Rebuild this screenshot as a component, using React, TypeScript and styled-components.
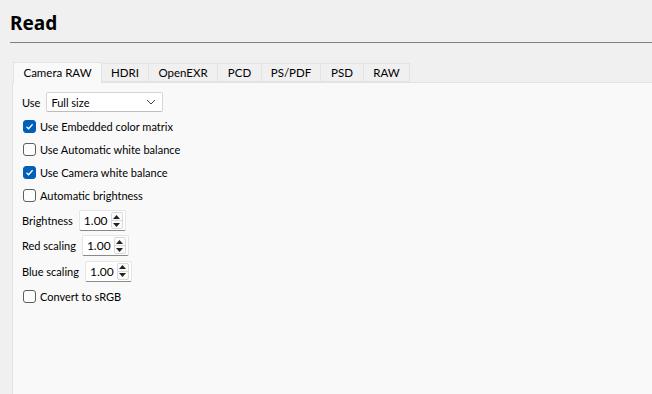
import React from "react";
import styled, { createGlobalStyle } from "styled-components";

const Global = createGlobalStyle`
  html, body { margin: 0; padding: 0; background: #f0f0f0; }
  body { font-family: "Lato", "Liberation Sans", sans-serif; font-size: 11px; color: #000; }
  * { box-sizing: border-box; }
`;

const Page = styled.div`
  width: 652px;
  height: 394px;
  overflow: hidden;
  background: #f0f0f0;
  display: flex;
  flex-direction: column;
`;

const Title = styled.h1`
  margin: 0 0 0 10px;
  padding: 10px 0 0 0;
  height: 43px;
  font-family: "Noto Sans", "Open Sans", sans-serif;
  font-size: 19px;
  font-weight: 700;
  line-height: 26px;
  border-bottom: 1px solid #808080;
`;

const TabArea = styled.div`
  flex: 1;
  display: flex;
  flex-direction: column;
  padding: 18px 0 0 12px;
`;

const TabBar = styled.div`
  display: flex;
  align-items: flex-end;
  padding-left: 2px;
  height: 21px;
  position: relative;
  z-index: 1;
`;

const Tab = styled.div<{ $active?: boolean; $w: number }>`
  width: ${(p) => p.$w}px;
  height: ${(p) => (p.$active ? 21 : 19)}px;
  margin-bottom: ${(p) => (p.$active ? -1 : 0)}px;
  display: flex;
  align-items: center;
  justify-content: center;
  background: ${(p) => (p.$active ? "#f9f9f9" : "#f0f0f0")};
  border: 1px solid #e3e3e3;
  border-bottom: ${(p) => (p.$active ? "none" : "1px solid #e3e3e3")};
  margin-left: -1px;
  font-size: 11.5px;
  padding-bottom: ${(p) => (p.$active ? 1 : 0)}px;
`;

const Panel = styled.div`
  flex: 1;
  background: #f9f9f9;
  border-left: 1px solid #e3e3e3;
  border-top: 1px solid #e3e3e3;
  padding: 8px 0 0 9px;
  display: flex;
  flex-direction: column;
`;

const Row = styled.div<{ $h: number }>`
  display: flex;
  align-items: center;
  height: ${(p) => p.$h}px;
  gap: 6px;
`;

const Label = styled.span`
  white-space: nowrap;
`;

const Combo = styled.div`
  width: 117px;
  height: 20px;
  background: #fff;
  border: 1px solid #d6d6d6;
  border-bottom-color: #bcbcbc;
  border-radius: 2px;
  display: flex;
  align-items: center;
  justify-content: space-between;
  padding: 0 6px 0 4px;
`;

const CheckRow = styled.label<{ $h?: number }>`
  display: flex;
  align-items: center;
  gap: 4px;
  height: ${(p) => p.$h ?? 23}px;
  padding-left: 1px;
`;

const Box = styled.span<{ $checked?: boolean }>`
  width: 13px;
  height: 13px;
  border-radius: 3px;
  display: inline-flex;
  align-items: center;
  justify-content: center;
  background: ${(p) => (p.$checked ? "#005fb8" : "#fdfdfd")};
  border: 1px solid ${(p) => (p.$checked ? "#005fb8" : "#5f5f5f")};
`;

const Spin = styled.div`
  width: 47px;
  height: 21px;
  background: #fff;
  border: 1px solid #e5e5e5;
  border-bottom-color: #8a8a8a;
  border-radius: 2px;
  display: flex;
  align-items: center;
  justify-content: space-between;
  padding-left: 4px;
  font-size: 12px;
`;

const SpinButtons = styled.div`
  width: 12px;
  height: 17px;
  margin-right: 2px;
  border: 1px solid #d9d9d9;
  border-radius: 2px;
  display: flex;
  flex-direction: column;
  background: #fbfbfb;
`;

const SpinHalf = styled.div<{ $top?: boolean }>`
  flex: 1;
  display: flex;
  align-items: center;
  justify-content: center;
  border-bottom: ${(p) => (p.$top ? "1px solid #d9d9d9" : "none")};
`;

const Check = () => (
  <svg width="9" height="9" viewBox="0 0 9 9">
    <path d="M1.5 4.7 L3.6 6.7 L7.6 2.3" fill="none" stroke="#fff" strokeWidth="1.3" />
  </svg>
);

const Chevron = () => (
  <svg width="10" height="6" viewBox="0 0 10 6">
    <path d="M1 1 L5 5 L9 1" fill="none" stroke="#404040" strokeWidth="1" />
  </svg>
);

const Arrows = () => (
  <SpinButtons>
    <SpinHalf $top>
      <svg width="7" height="4" viewBox="0 0 7 4">
        <path d="M0 4 L3.5 0 L7 4 Z" fill="#222" />
      </svg>
    </SpinHalf>
    <SpinHalf>
      <svg width="7" height="4" viewBox="0 0 7 4">
        <path d="M0 0 L3.5 4 L7 0 Z" fill="#222" />
      </svg>
    </SpinHalf>
  </SpinButtons>
);

const tabs: [string, number][] = [
  ["Camera RAW", 89],
  ["HDRI", 48],
  ["OpenEXR", 70],
  ["PCD", 45],
  ["PS/PDF", 60],
  ["PSD", 44],
  ["RAW", 47],
];

const checks: [string, boolean][] = [
  ["Use Embedded color matrix", true],
  ["Use Automatic white balance", false],
  ["Use Camera white balance", true],
  ["Automatic brightness", false],
];

const spins: [string, number][] = [
  ["Brightness", 25],
  ["Red scaling", 25],
  ["Blue scaling", 26],
];

export default function App() {
  return (
    <Page>
      <Global />
      <Title>Read</Title>
      <TabArea>
        <TabBar>
          {tabs.map(([t, w], i) => (
            <Tab key={t} $w={w} $active={i === 0}>
              {t}
            </Tab>
          ))}
        </TabBar>
        <Panel>
          <Row $h={22}>
            <Label>Use</Label>
            <Combo>
              <span>Full size</span>
              <Chevron />
            </Combo>
          </Row>
          <div style={{ height: 2 }} />
          {checks.map(([t, c]) => (
            <CheckRow key={t}>
              <Box $checked={c}>{c && <Check />}</Box>
              <Label>{t}</Label>
            </CheckRow>
          ))}
          <div style={{ height: 1 }} />
          {spins.map(([t, h]) => (
            <Row $h={h} key={t}>
              <Label>{t}</Label>
              <Spin>
                <span>1.00</span>
                <Arrows />
              </Spin>
            </Row>
          ))}
          <CheckRow $h={25}>
            <Box />
            <Label>Convert to sRGB</Label>
          </CheckRow>
        </Panel>
      </TabArea>
    </Page>
  );
}
